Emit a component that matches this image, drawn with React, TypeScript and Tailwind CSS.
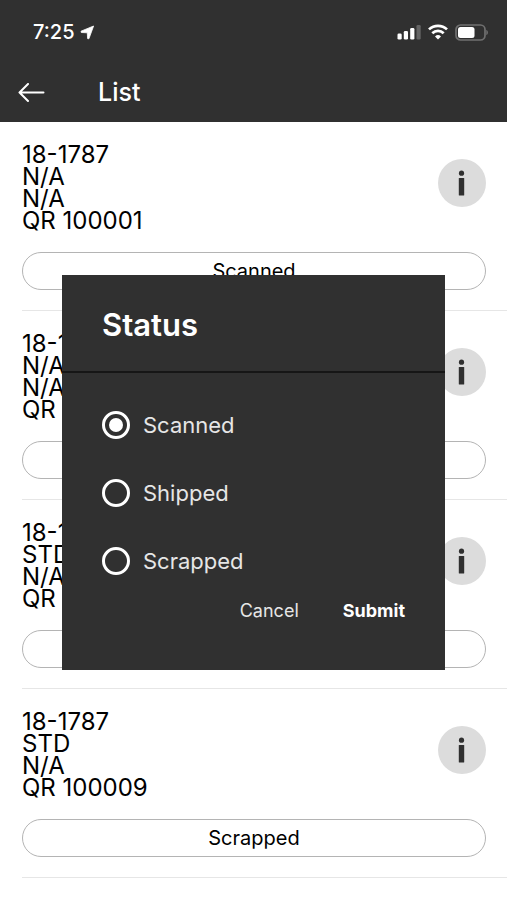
import { useState } from "react";

type Item = {
  id: number;
  number: string;
  size: string;
  note: string;
  qr: string;
  status: string;
};

const statuses = ["Scanned", "Shipped", "Scrapped"];

const initialItems: Item[] = [
  { id: 1, number: "18-1787", size: "N/A", note: "N/A", qr: "QR 100001", status: "Scanned" },
  { id: 2, number: "18-1787", size: "N/A", note: "N/A", qr: "QR 100002", status: "Scanned" },
  { id: 3, number: "18-1787", size: "STD", note: "N/A", qr: "QR 100008", status: "Scanned" },
  { id: 4, number: "18-1787", size: "STD", note: "N/A", qr: "QR 100009", status: "Scrapped" },
];

function StatusBar() {
  return (
    <div className="flex h-16 items-center justify-between pr-[18px] pl-[33px]">
      <div className="flex items-center gap-[5px]">
        <span className="text-xl font-medium">7:25</span>
        <svg width="15" height="15" viewBox="0 0 15 15" fill="currentColor" stroke="currentColor" strokeWidth="0.8" strokeLinejoin="round" aria-hidden="true">
          <path d="M13.6 1L1 6.200l.3 1.300 6 .300.300 5.800 1.300.2z" />
        </svg>
      </div>

      <div className="flex items-center gap-[7px]">
        <svg width="24" height="16" viewBox="0 0 24 16" fill="currentColor" aria-hidden="true">
          <rect x="0.500" y="9.500" width="4.200" height="6" rx="1.300" />
          <rect x="6.800" y="7" width="4.200" height="8.500" rx="1.300" />
          <rect x="13.200" y="4" width="4.200" height="11.500" rx="1.300" />
          <rect x="19.500" y="1" width="4.200" height="14.500" rx="1.300" opacity="0.25" />
        </svg>
        <svg width="20" height="16" viewBox="0 0 20 16" fill="none" stroke="currentColor" strokeWidth="2.700" aria-hidden="true">
          <path d="M1 5.400a13 13 0 0 1 18 0" />
          <path d="M4.300 9.200a8.200 8.200 0 0 1 11.400 0" />
          <path d="M10 15.600l-3-3.200a4.300 4.300 0 0 1 6 0z" fill="currentColor" stroke="none" />
        </svg>
        <svg width="34" height="17" viewBox="0 0 34 17" fill="none" aria-hidden="true">
          <rect x="1" y="1" width="29" height="15" rx="4.500" stroke="#707070" strokeWidth="1.700" />
          <rect x="3" y="3" width="16.500" height="11" rx="2.500" fill="currentColor" />
          <path d="M31.500 6c1.600.6 1.600 4.400 0 5z" fill="#888" />
        </svg>
      </div>
    </div>
  );
}

function Header() {
  return (
    <header className="bg-[#303030] text-white">
      <StatusBar />
      <div className="flex h-[58px] items-center gap-[53px] pl-[18px]">
        <button type="button" aria-label="Back">
          <svg width="27" height="20" viewBox="0 0 27 20" fill="none" stroke="currentColor" strokeWidth="2" strokeLinecap="round" strokeLinejoin="round" aria-hidden="true">
            <path d="M25.500 9.500H1.500M10 1L1.500 9.500l8.500 8.500" />
          </svg>
        </button>
        <h1 className="text-[25px] font-medium">List</h1>
      </div>
    </header>
  );
}

function ListItem({ item, onEdit }: { item: Item; onEdit: () => void }) {
  return (
    <li className="ml-[22px] border-b border-[#e6e6e6] pt-[22px] pr-[21px] pb-5">
      <div className="flex items-start justify-between">
        <div className="text-2xl leading-[22px]">
          <p>{item.number}</p>
          <p>{item.size}</p>
          <p>{item.note}</p>
          <p>{item.qr}</p>
        </div>
        <button
          type="button"
          aria-label="Details"
          className="mt-[15px] flex size-12 items-center justify-center rounded-full bg-[#dcdcdc] text-[#303030]"
        >
          <svg width="8" height="26" viewBox="0 0 8 26" fill="currentColor" aria-hidden="true">
            <circle cx="3.500" cy="3.200" r="2.600" />
            <rect x="0.800" y="8" width="5.400" height="17.500" rx="0.500" />
          </svg>
        </button>
      </div>

      <button
        type="button"
        onClick={onEdit}
        className="mt-5 h-[38px] w-full rounded-full border border-[#b4b4b4] text-xl"
      >
        {item.status}
      </button>
    </li>
  );
}

function StatusDialog({
  status,
  onCancel,
  onSubmit,
}: {
  status: string;
  onCancel: () => void;
  onSubmit: (status: string) => void;
}) {
  const [selected, setSelected] = useState(status);

  return (
    <div className="fixed inset-0 flex items-center px-[62px] pt-[45px]">
      <form
        role="dialog"
        aria-labelledby="status-title"
        className="w-full bg-[#303030] text-[#e6e6e6]"
        onSubmit={(event) => {
          event.preventDefault();
          onSubmit(selected);
        }}
      >
        <h2
          id="status-title"
          className="border-b-2 border-[#161616] px-10 pt-[30px] pb-[26px] text-[31px] leading-10 font-semibold text-white"
        >
          Status
        </h2>

        <div className="flex flex-col gap-10 px-10 pt-[38px]">
          {statuses.map((name) => (
            <label key={name} className="flex h-7 items-center gap-[13px] text-[22px]">
              <input
                type="radio"
                name="status"
                value={name}
                checked={selected === name}
                onChange={() => setSelected(name)}
                className="size-7 appearance-none rounded-full border-3 border-white bg-clip-content p-1 checked:bg-white"
              />
              {name}
            </label>
          ))}
        </div>

        <div className="flex justify-end gap-11 px-10 pt-[22px] pb-[45px] text-lg">
          <button type="button" onClick={onCancel}>
            Cancel
          </button>
          <button type="submit" className="font-bold text-white">
            Submit
          </button>
        </div>
      </form>
    </div>
  );
}

export default function App() {
  const [items, setItems] = useState(initialItems);
  const [editing, setEditing] = useState<number | null>(1);

  const current = items.find((item) => item.id === editing);

  return (
    <div className="min-h-screen bg-white font-['Inter',sans-serif] text-black">
      <Header />

      <main>
        <ul>
          {items.map((item) => (
            <ListItem key={item.id} item={item} onEdit={() => setEditing(item.id)} />
          ))}
        </ul>
      </main>

      {current && (
        <StatusDialog
          status={current.status}
          onCancel={() => setEditing(null)}
          onSubmit={(status) => {
            setItems(items.map((item) => (item.id === current.id ? { ...item, status } : item)));
            setEditing(null);
          }}
        />
      )}
    </div>
  );
}
